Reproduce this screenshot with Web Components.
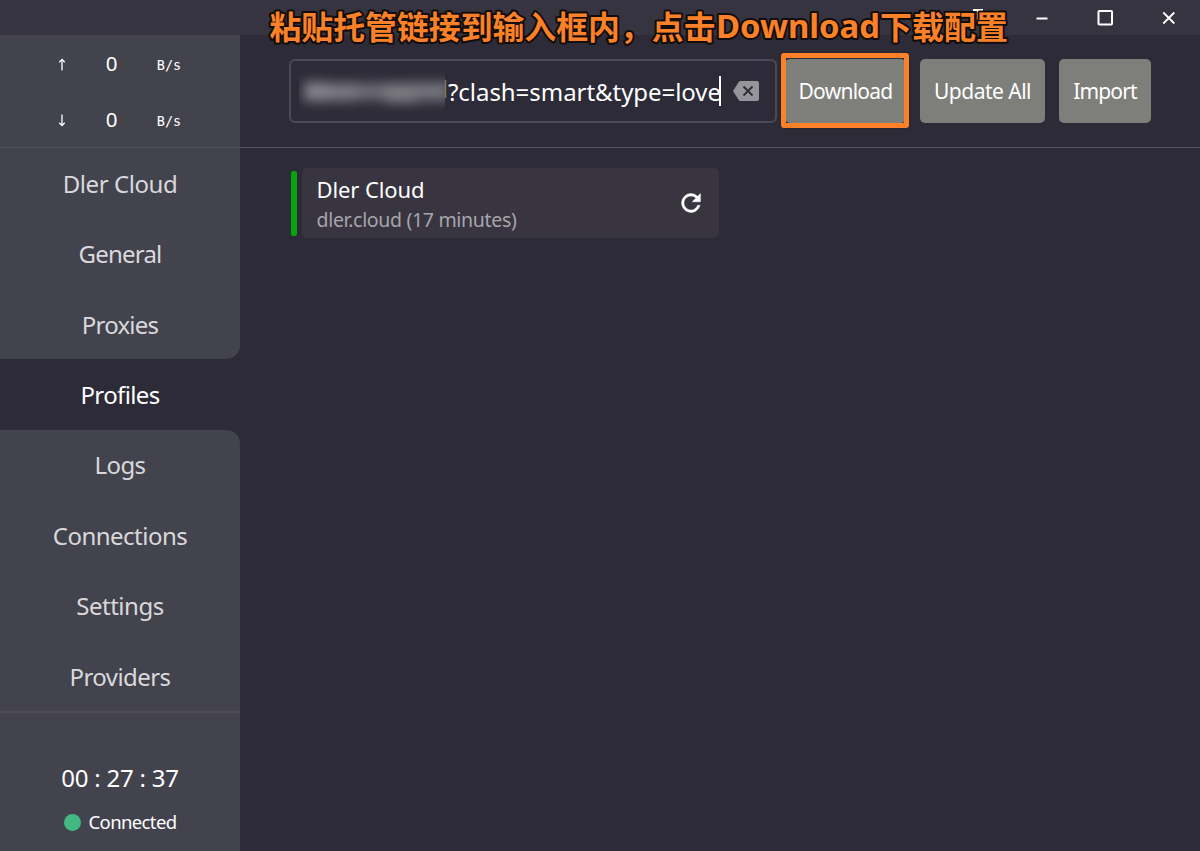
<!DOCTYPE html>
<html lang="en">
<head>
<meta charset="utf-8">
<title>Profiles</title>
<style>
html,body{margin:0;height:100%;background:#2c2b37}
body{font-family:"Noto Sans","Noto Sans CJK SC",sans-serif;color:#fff;overflow:hidden}
</style>
</head>
<body>
<clash-app></clash-app>
<script>
const define = (name, html, setup) => customElements.define(name, class extends HTMLElement {
  connectedCallback() {
    if (this.shadowRoot) return;
    const t = document.createElement('template');
    t.innerHTML = html;
    this.attachShadow({mode: 'open'}).append(t.content.cloneNode(true));
    if (setup) setup(this, this.shadowRoot);
  }
});

// A single line of text whose tracking is tuned to a given width.
define('fit-text', `<style>:host{display:inline-block;white-space:pre;line-height:1.36}span{display:inline-block}</style><span><slot></slot></span>`, (el, root) => {
  const s = root.querySelector('span');
  const want = +el.getAttribute('w');
  const have = s.getBoundingClientRect().width;
  const n = el.textContent.length;
  if (want && have) {
    const gap = (want - have) / n;
    s.style.letterSpacing = gap.toFixed(3) + 'px';
  }
});

define('title-bar', `<style>
:host{display:flex;height:35px;background:#353440;box-sizing:border-box;justify-content:flex-end}
svg{display:block}</style>
<svg width="240" height="35" fill="none" stroke="#fff" stroke-width="2">
<path d="M13 10h10M18 10v12"/><path d="M76.500 18.500h11"/><rect x="138.500" y="11" width="13.500" height="13.500" rx=".8"/><path d="M203.300 12.500l11 11M214.300 12.500l-11 11" stroke-width="1.800"/></svg>`);

define('traffic-row', `<style>
:host{display:grid;grid-template-columns:28px 72px 42px;justify-content:center;align-items:center;height:56px;text-align:center;box-sizing:border-box;padding-right:3px}
svg{display:block;margin:3px auto 0}
.n{font-size:20.500px;margin-top:-1px}.u{font:13.500px "DejaVu Sans Mono",monospace;padding:4px 0 0 1px}
:host([down]) svg{transform:scaleY(-1)}
</style><svg width="8" height="13" viewBox="0 0 8 13" fill="none" stroke="#fff" stroke-width="1.300"><path d="M4 12.500V1.500M1.300 4.200L4 1.400l2.700 2.800"/></svg><span class="n">0</span><span class="u"><fit-text w="24.500">B/s</fit-text></span>`);

define('nav-item', `<style>
:host{display:flex;height:70.400px;align-items:center;justify-content:center;background:#43434e;font-size:24px;color:#d9d9db;box-sizing:border-box;padding-top:2px}
:host([active]){background:#2c2b37;color:#fff}
:host([before]){border-bottom-right-radius:14px}
:host([after]){border-top-right-radius:14px}
</style><slot></slot>`);

define('status-box', `<style>
:host{display:flex;flex-direction:column;align-items:center;flex:1;background:#43434e;border-top:2px solid #504d56;padding-top:48px;box-sizing:border-box}
.t{font-size:24px;height:33px}.c{display:flex;align-items:center;gap:8px;font-size:18.500px;margin-top:15px}
i{width:17px;height:17px;border-radius:50%;background:#42b983;margin-top:2px}
</style><div class="t"><fit-text w="117.500">00 : 27 : 37</fit-text></div><div class="c"><i></i><fit-text w="88">Connected</fit-text></div>`);

define('side-bar', `<style>
:host{display:flex;flex-direction:column;width:240px;background:#2c2b37}
.traffic{height:112px;background:#43434e;border-bottom:1px solid #55535d;box-sizing:content-box}
nav{display:block}
</style>
<div class="traffic"><traffic-row></traffic-row><traffic-row down></traffic-row></div>
<nav><nav-item><fit-text w="114.500">Dler Cloud</fit-text></nav-item><nav-item><fit-text w="83">General</fit-text></nav-item><nav-item before><fit-text w="76.500">Proxies</fit-text></nav-item><nav-item active><fit-text w="79">Profiles</fit-text></nav-item><nav-item after><fit-text w="51">Logs</fit-text></nav-item><nav-item><fit-text w="134.500">Connections</fit-text></nav-item><nav-item><fit-text w="87.500">Settings</fit-text></nav-item><nav-item><fit-text w="101">Providers</fit-text></nav-item></nav>
<status-box></status-box>`);

define('url-field', `<style>
:host{display:flex;align-items:center;box-sizing:border-box;width:488px;height:64px;border:2px solid #4b4954;border-radius:6px;padding-left:8px;font-size:24px}
.veil{width:149px;height:44px;flex:none}.txt{height:33px}.caret{width:2px;height:30px;background:#fff;margin-left:-2px}
.clear{margin:-1px 0 0 12px}
</style>
<svg class="veil" viewBox="0 0 149 44"><defs><filter id="b" x="-20%" y="-50%" width="140%" height="200%"><feGaussianBlur stdDeviation="6"/></filter><clipPath id="c"><rect width="146" height="44"/></clipPath></defs>
<g clip-path="url(#c)"><g filter="url(#b)" fill="#85848c"><rect x="5" y="13" width="24" height="19"/><rect x="28" y="14" width="30" height="18" fill="#7b7a83"/><rect x="57" y="14" width="30" height="17" fill="#6e6c76"/><rect x="86" y="14" width="30" height="20" fill="#7b7a82"/><rect x="115" y="13" width="36" height="19" fill="#74737c"/></g></g><path d="M146.500 11v18" stroke="#817653" stroke-width="1.500"/></svg>
<span class="txt"><fit-text w="273">?clash=smart&amp;type=love</fit-text></span><span class="caret"></span>
<svg class="clear" width="26" height="20"><path d="M7.500 0H24q2 0 2 2v16q0 2-2 2H7.500q-1 0-1.800-1L0 10l5.700-9q.8-1 1.800-1z" fill="#96959b"/><path d="M10.500 5.500l9 9M19.500 5.500l-9 9" stroke="#2c2b37" stroke-width="1.800"/></svg>`);

define('action-button', `<style>
:host{display:flex;align-items:center;justify-content:center;height:64px;border-radius:5px;background:#7e7e7a;font-size:21px;box-sizing:border-box;padding:1px 0 0;position:relative}
:host([marked])::after{content:"";position:absolute;inset:-6px -3px -5px -4px;border:5px solid #fb8128;border-radius:3px;box-shadow:0 0 2px #251a16}
</style><slot></slot>`);

define('profile-card', `<style>
:host{display:flex;gap:5px;align-items:center;height:70px;width:428px}
.mark{width:6px;height:65px;border-radius:2px;background:#09a40d}
.body{display:flex;flex:1;height:70px;background:#383541;border-radius:5px;align-items:center;padding:2px 18px 0 14.500px;justify-content:space-between;box-sizing:border-box}
.a{font-size:22px;height:30px}.b{font-size:19.500px;height:28px;color:#a6a5aa;margin-top:2px}
svg{margin-top:-2px}
</style><span class="mark"></span><div class="body"><div><div class="a"><fit-text w="108">Dler Cloud</fit-text></div><div class="b"><fit-text w="200">dler.cloud (17 minutes)</fit-text></div></div>
<svg width="20" height="20" viewBox="3.500 3.500 17 17"><path fill="#fff" stroke="#fff" stroke-width=".4" d="M17.650 6.350A7.950 7.950 0 0 0 12 4a8 8 0 1 0 7.730 10h-2.080A6 6 0 1 1 12 6c1.660 0 3.140.69 4.220 1.780L13 11h7V4z"/></svg></div>`);

define('main-pane', `<style>
:host{display:block;flex:1}
header{display:flex;border-bottom:1px solid #55535d;padding:24px 0 0 49px;box-sizing:border-box;height:113px}
url-field{margin-right:8px}
.g{display:flex;gap:14px}
.list{padding:20px 0 0 51px}
</style>
<header><url-field></url-field><div class="g"><action-button marked style="width:121px"><fit-text w="94">Download</fit-text></action-button><action-button style="width:125px"><fit-text w="97">Update All</fit-text></action-button><action-button style="width:92px"><fit-text w="63.500">Import</fit-text></action-button></div></header>
<div class="list"><profile-card></profile-card></div>`);

define('note-caption', `<style>
:host{position:absolute;left:260px;top:0;z-index:2}
svg{display:block}text{font:bold 32px "Noto Sans","Noto Sans CJK SC",sans-serif;fill:#fb8128;stroke:#120d0b;stroke-width:4px;paint-order:stroke;stroke-linejoin:round}
.en{font-size:33px}
</style><svg width="770" height="52"><text y="38.500"><tspan x="9.500" textLength="446" lengthAdjust="spacingAndGlyphs">粘贴托管链接到输入框内，点击</tspan><tspan class="en" x="456" y="38" textLength="164" lengthAdjust="spacingAndGlyphs">Download</tspan><tspan x="620" y="38.500" textLength="128" lengthAdjust="spacingAndGlyphs">下载配置</tspan></text></svg>`);

define('clash-app', `<style>
:host{display:flex;flex-direction:column;width:1200px;height:851px;position:relative;background:#2c2b37;overflow:hidden}
.row{display:flex;flex:1}
</style><title-bar></title-bar><div class="row"><side-bar></side-bar><main-pane></main-pane></div><note-caption></note-caption>`);
</script>
</body>
</html>
